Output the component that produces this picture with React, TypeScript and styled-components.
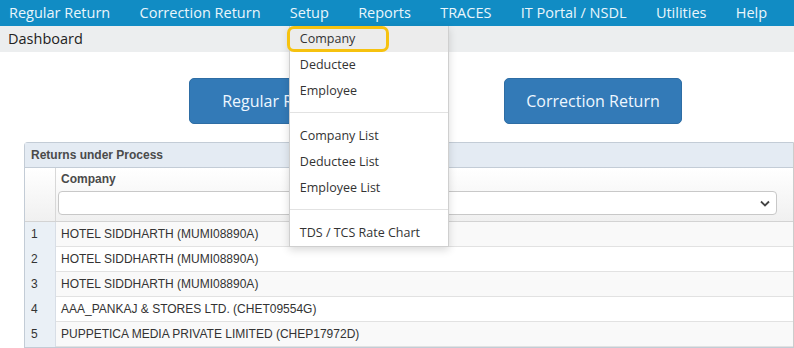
import styled, { createGlobalStyle } from "styled-components";

const GlobalStyle = createGlobalStyle`
  body {
    margin: 0;
    background: #ffffff;
    font-family: "Open Sans", "Noto Sans", sans-serif;
  }
`;

const Page = styled.div`
  width: 794px;
  height: 348px;
  overflow: hidden;
  position: relative;
`;

const NavBar = styled.nav`
  display: flex;
  align-items: center;
  height: 26px;
  background: #118cc4;
  padding-left: 9px;
`;

const NavItem = styled.div<{ $gap?: number }>`
  position: relative;
  margin-right: ${(p) => (p.$gap !== undefined ? p.$gap : 29.3)}px;
  font-size: 14.5px;
  line-height: 26px;
  color: #e9f6fc;
  white-space: nowrap;
`;

const Dropdown = styled.div`
  position: absolute;
  top: 26px;
  left: -1px;
  width: 158px;
  background: #ffffff;
  border: 1px solid #cfcfcf;
  border-top: none;
  box-shadow: 0 3px 8px rgba(0, 0, 0, 0.15);
  z-index: 10;
`;

const MenuItem = styled.div<{ $active?: boolean }>`
  position: relative;
  height: 26px;
  line-height: 26px;
  padding-left: 10px;
  font-size: 12.5px;
  color: #333333;
  background: ${(p) => (p.$active ? "#ececec" : "#ffffff")};
`;

const Highlight = styled.div`
  position: absolute;
  left: -3px;
  top: 0;
  width: 96px;
  height: 20px;
  border: 3px solid #f6c20f;
  border-radius: 7px;
`;

const Divider = styled.div`
  height: 1px;
  background: #e2e2e2;
  margin: 8px 0 10px;
`;

const Breadcrumb = styled.div`
  height: 26px;
  line-height: 26px;
  background: #eceeef;
  padding-left: 8px;
  font-size: 14.5px;
  color: #222222;
`;

const ButtonRow = styled.div`
  display: flex;
  gap: 137px;
  padding: 26px 0 0 189px;
`;

const BigButton = styled.div`
  width: 176px;
  height: 44px;
  display: flex;
  align-items: center;
  justify-content: center;
  background: #337ab7;
  border: 1px solid #2e6da4;
  border-radius: 5px;
  color: #eef7ff;
  font-size: 16px;
`;

const Panel = styled.div`
  margin: 18px 0 0 24px;
  border: 1px solid #c3ccd6;
  border-right-color: #cccccc;
  border-radius: 4px 0 0 0;
  font-family: "Liberation Sans", Arial, sans-serif;
  font-size: 12px;
  color: #333333;
`;

const PanelTitle = styled.div`
  height: 24px;
  line-height: 24px;
  padding-left: 6px;
  background: #e4ebf3;
  border-bottom: 1px solid #c3ccd6;
  font-weight: bold;
  color: #4a4a4a;
`;

const HeaderRow = styled.div`
  display: grid;
  grid-template-columns: 31px 1fr;
  height: 53px;
  background: linear-gradient(#ffffff, #f0f0f0);
  border-bottom: 1px solid #d3d3d3;
`;

const RowNumHead = styled.div`
  border-right: 1px solid #d8d8d8;
`;

const HeadCell = styled.div`
  padding: 4px 16px 0 2px;
`;

const HeadLabel = styled.div`
  font-weight: bold;
  color: #4a4a4a;
  padding-left: 3px;
  height: 19px;
`;

const FilterSelect = styled.div`
  display: flex;
  align-items: center;
  justify-content: flex-end;
  height: 22px;
  border: 1px solid #c8c8c8;
  border-radius: 4px;
  background: #ffffff;
  padding-right: 6px;
`;

const DataRow = styled.div<{ $alt?: boolean }>`
  display: grid;
  grid-template-columns: 31px 1fr;
  height: 24px;
  line-height: 25px;
  border-bottom: 1px solid #e2e2e2;
  background: ${(p) => (p.$alt ? "#f9f9f9" : "#ffffff")};
`;

const RowNum = styled.div`
  background: #eaf0f6;
  border-right: 1px solid #d8dee6;
  padding-left: 6px;
`;

const Cell = styled.div`
  padding-left: 5px;
`;

const rows = [
  "HOTEL SIDDHARTH (MUMI08890A)",
  "HOTEL SIDDHARTH (MUMI08890A)",
  "HOTEL SIDDHARTH (MUMI08890A)",
  "AAA_PANKAJ & STORES LTD. (CHET09554G)",
  "PUPPETICA MEDIA PRIVATE LIMITED (CHEP17972D)",
];

function App() {
  return (
    <Page>
      <GlobalStyle />
      <NavBar>
        <NavItem>Regular Return</NavItem>
        <NavItem>Correction Return</NavItem>
        <NavItem>
          Setup
          <Dropdown>
            <MenuItem $active>
              Company
              <Highlight />
            </MenuItem>
            <MenuItem>Deductee</MenuItem>
            <MenuItem>Employee</MenuItem>
            <Divider />
            <MenuItem>Company List</MenuItem>
            <MenuItem>Deductee List</MenuItem>
            <MenuItem>Employee List</MenuItem>
            <Divider />
            <MenuItem>TDS / TCS Rate Chart</MenuItem>
          </Dropdown>
        </NavItem>
        <NavItem>Reports</NavItem>
        <NavItem>TRACES</NavItem>
        <NavItem>IT Portal / NSDL</NavItem>
        <NavItem>Utilities</NavItem>
        <NavItem $gap={0}>Help</NavItem>
      </NavBar>
      <Breadcrumb>Dashboard</Breadcrumb>
      <ButtonRow>
        <BigButton>Regular Return</BigButton>
        <BigButton>Correction Return</BigButton>
      </ButtonRow>
      <Panel>
        <PanelTitle>Returns under Process</PanelTitle>
        <HeaderRow>
          <RowNumHead />
          <HeadCell>
            <HeadLabel>Company</HeadLabel>
            <FilterSelect>
              <svg width="10" height="7" viewBox="0 0 10 7">
                <path d="M1 1.5 L5 5.5 L9 1.5" fill="none" stroke="#444" strokeWidth="1.8" />
              </svg>
            </FilterSelect>
          </HeadCell>
        </HeaderRow>
        {rows.map((r, i) => (
          <DataRow key={i} $alt={i % 2 === 0}>
            <RowNum>{i + 1}</RowNum>
            <Cell>{r}</Cell>
          </DataRow>
        ))}
      </Panel>
    </Page>
  );
}

export default App;
